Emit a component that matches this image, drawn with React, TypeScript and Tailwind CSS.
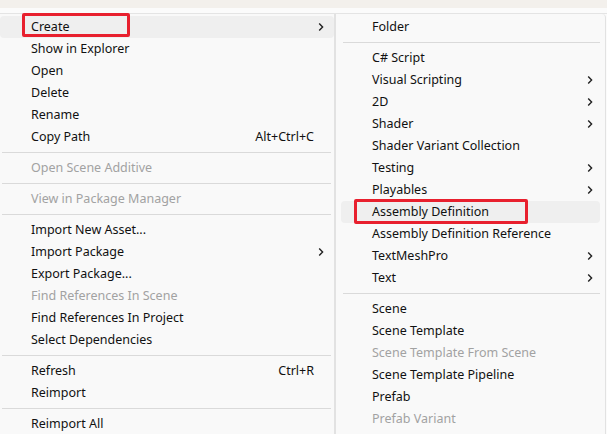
import React from "react";

type Item =
  | { sep: true }
  | { label: string; shortcut?: string; sub?: boolean; disabled?: boolean; hl?: boolean; box?: boolean; sep?: false };

const left: Item[] = [
  { label: "Create", sub: true, hl: true, box: true },
  { label: "Show in Explorer" },
  { label: "Open" },
  { label: "Delete" },
  { label: "Rename" },
  { label: "Copy Path", shortcut: "Alt+Ctrl+C" },
  { sep: true },
  { label: "Open Scene Additive", disabled: true },
  { sep: true },
  { label: "View in Package Manager", disabled: true },
  { sep: true },
  { label: "Import New Asset..." },
  { label: "Import Package", sub: true },
  { label: "Export Package..." },
  { label: "Find References In Scene", disabled: true },
  { label: "Find References In Project" },
  { label: "Select Dependencies" },
  { sep: true },
  { label: "Refresh", shortcut: "Ctrl+R" },
  { label: "Reimport" },
  { sep: true },
  { label: "Reimport All" },
];

const right: Item[] = [
  { label: "Folder" },
  { sep: true },
  { label: "C# Script" },
  { label: "Visual Scripting", sub: true },
  { label: "2D", sub: true },
  { label: "Shader", sub: true },
  { label: "Shader Variant Collection" },
  { label: "Testing", sub: true },
  { label: "Playables", sub: true },
  { label: "Assembly Definition", hl: true, box: true },
  { label: "Assembly Definition Reference" },
  { label: "TextMeshPro", sub: true },
  { label: "Text", sub: true },
  { sep: true },
  { label: "Scene" },
  { label: "Scene Template" },
  { label: "Scene Template From Scene", disabled: true },
  { label: "Scene Template Pipeline" },
  { label: "Prefab" },
  { label: "Prefab Variant", disabled: true },
];

function Chevron() {
  return (
    <svg width="6" height="10" viewBox="0 0 6 10" className="block">
      <path d="M1.2 1.5 L4.6 5 L1.2 8.5" fill="none" stroke="#222" strokeWidth="1.4" />
    </svg>
  );
}

function LeftMenu() {
  return (
    <div className="w-[335px] shrink-0 border-r border-[#e2e2e2] bg-[#f9f9f9] pt-[2px]">
      {left.map((it, i) =>
        it.sep ? (
          <div key={i} className="flex h-[9px] items-center pl-[2px] pr-[3px]">
            <div className="h-px w-full bg-[#dadada]" />
          </div>
        ) : (
          <div
            key={i}
            className={
              "relative flex h-[22px] items-center pl-[31px] " +
              (it.hl ? "rounded-[4px] bg-[#efefef] " : "") +
              (it.disabled ? "text-[#a2a2a2]" : "text-[#111]")
            }
          >
            <span className="flex-1">{it.label}</span>
            {it.shortcut && <span>{it.shortcut}</span>}
            <span className="flex w-[20px] justify-start pl-[4px]">{it.sub && <Chevron />}</span>
            {it.box && (
              <div className="pointer-events-none absolute left-[22px] top-[-3px] h-[24px] w-[108px] rounded-[2px] border-[3px] border-[#e8202e]" />
            )}
          </div>
        )
      )}
    </div>
  );
}

function RightMenu() {
  return (
    <div className="w-[271px] shrink-0 rounded-tr-[4px] border-l border-r border-[#e2e2e2] bg-[#f9f9f9] pt-[2px]">
      {right.map((it, i) =>
        it.sep ? (
          <div key={i} className="flex h-[9px] items-center pl-[7px] pr-[5px]">
            <div className="h-px w-full bg-[#dadada]" />
          </div>
        ) : it.hl ? (
          <div
            key={i}
            className="relative mx-[5px] flex h-[22px] items-center rounded-[4px] bg-[#efefef] pl-[31px] text-[#111]"
          >
            <span className="flex-1">{it.label}</span>
            {it.box && (
              <div className="pointer-events-none absolute left-[13px] top-[-2px] h-[25px] w-[174px] rounded-[2px] border-[3px] border-[#e8202e]" />
            )}
          </div>
        ) : (
          <div
            key={i}
            className={
              "relative flex h-[22px] items-center pl-[36px] " +
              (it.disabled ? "text-[#a2a2a2]" : "text-[#111]")
            }
          >
            <span className="flex-1">{it.label}</span>
            <span className="flex w-[20px] justify-start pl-[2px]">{it.sub && <Chevron />}</span>
          </div>
        )
      )}
    </div>
  );
}

export default function App() {
  return (
    <div
      className="h-[434px] w-[607px] overflow-hidden bg-[#fbfbfb] text-[12.5px] leading-none"
      style={{ fontFamily: '"Noto Sans", "Open Sans", sans-serif' }}
    >
      <div className="h-[8px] bg-[#f3f0ec]" />
      <div className="h-[5px]" />
      <div className="flex border-t border-[#e4e4e4]">
        <LeftMenu />
        <RightMenu />
      </div>
    </div>
  );
}
